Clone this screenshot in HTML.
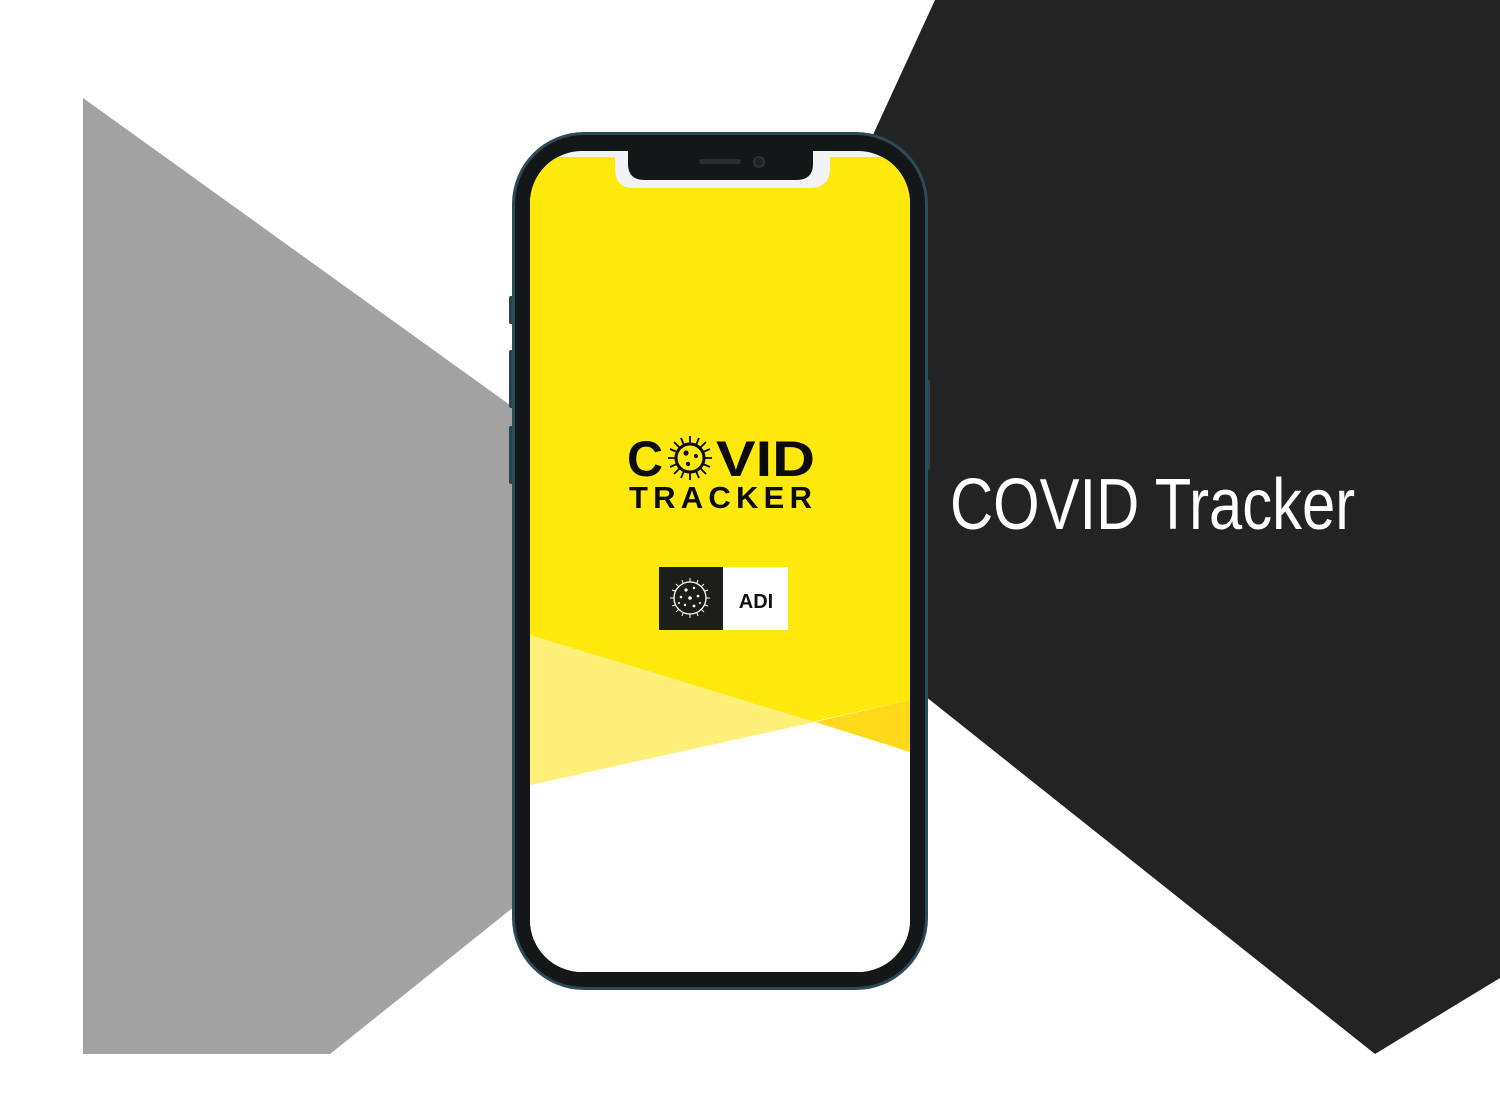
<!DOCTYPE html>
<html><head><meta charset="utf-8"><style>
html,body{margin:0;padding:0;background:#fff;}
body{width:1500px;height:1118px;position:relative;overflow:hidden;font-family:"Liberation Sans",sans-serif;}
svg{position:absolute;left:0;top:0;}
.title{position:absolute;left:950px;top:464px;font-size:72px;color:#fff;white-space:nowrap;transform:scaleX(0.83);transform-origin:left top;}
</style></head><body>
<svg width="1500" height="1118" viewBox="0 0 1500 1118">
  <polygon points="83,98 720,556 720,742 330,1054 83,1054" fill="#a3a2a2"/>
  <polygon points="935,0 1500,0 1500,978 1375,1054 720,533 797,300" fill="#232323"/>
  <rect x="509" y="296" width="5" height="28" rx="2" fill="#2a4352"/>
  <rect x="509" y="350" width="5" height="58" rx="2" fill="#2a4352"/>
  <rect x="509" y="426" width="5" height="58" rx="2" fill="#2a4352"/>
  <rect x="926" y="380" width="4" height="90" rx="2" fill="#2a4352"/>
  <rect x="512" y="132" width="416" height="858" rx="72" fill="#2c4a5a"/>
  <rect x="515" y="135" width="410" height="852" rx="69" fill="#141718"/>
  <clipPath id="scr"><rect x="530" y="151" width="380" height="821" rx="52"/></clipPath>
  <g clip-path="url(#scr)">
    <rect x="530" y="151" width="380" height="821" fill="#f2f3f5"/>
    <rect x="530" y="157" width="380" height="815" fill="#ffe90d"/>
    <polygon points="530,785 910,700 910,972 530,972" fill="#ffffff"/>
    <polygon points="530,635 815,722 530,785" fill="#fff07a"/>
    <polygon points="815,722 910,700 910,752" fill="#ffd91a"/>
  </g>
  <path d="M615,151 L629,151 Q628,151 628,160 L628,163 Q628,180 645,180 L796,180 Q813,180 813,163 L813,160 Q813,151 818,151 L830,151 L830,168 Q830,188 810,188 L633,188 Q615,188 615,168 Z" fill="#f2f3f5"/>
  <path d="M628,150 L813,150 L813,164 Q813,180 796,180 L645,180 Q628,180 628,164 Z" fill="#141718"/>
  <rect x="699" y="159" width="42" height="5" rx="2.5" fill="#2b2e30"/>
  <circle cx="759" cy="162" r="5" fill="#1e2123" stroke="#2e3234" stroke-width="2"/>
  <rect x="659" y="567" width="64" height="63" fill="#1d1d1b"/>
  <rect x="723" y="567" width="65" height="63" fill="#fff"/>
  <g stroke="#fff" stroke-width="1.3" fill="none">
    <circle cx="690" cy="598" r="16"/>
    <g stroke-width="1">
      <line x1="690" y1="578" x2="690" y2="582"/><line x1="690" y1="614" x2="690" y2="618"/>
      <line x1="670" y1="598" x2="674" y2="598"/><line x1="706" y1="598" x2="710" y2="598"/>
      <line x1="676" y1="584" x2="679" y2="587"/><line x1="701" y1="609" x2="704" y2="612"/>
      <line x1="704" y1="584" x2="701" y2="587"/><line x1="679" y1="609" x2="676" y2="612"/>
      <line x1="682" y1="580" x2="683" y2="583"/><line x1="698" y1="580" x2="697" y2="583"/>
      <line x1="682" y1="616" x2="683" y2="613"/><line x1="698" y1="616" x2="697" y2="613"/>
      <line x1="672" y1="590" x2="675" y2="591"/><line x1="672" y1="606" x2="675" y2="605"/>
      <line x1="708" y1="590" x2="705" y2="591"/><line x1="708" y1="606" x2="705" y2="605"/>
    </g>
  </g>
  <g fill="#fff">
    <circle cx="686" cy="590" r="1.6"/><circle cx="694" cy="588" r="1.2"/><circle cx="681" cy="597" r="1.3"/>
    <circle cx="690" cy="598" r="1.8"/><circle cx="698" cy="596" r="1.3"/><circle cx="685" cy="605" r="1.2"/>
    <circle cx="694" cy="606" r="1.4"/><circle cx="700" cy="603" r="1"/><circle cx="679" cy="603" r="1"/>
  </g>
  <text x="756" y="608" font-family="Liberation Sans" font-weight="bold" font-size="20" text-anchor="middle" fill="#111">ADI</text>
  <text x="627" y="476" font-family="Liberation Sans" font-weight="bold" font-size="50" fill="#0a0a0a" textLength="36" lengthAdjust="spacingAndGlyphs">C</text>
  <text x="716" y="476" font-family="Liberation Sans" font-weight="bold" font-size="50" fill="#0a0a0a" textLength="99" lengthAdjust="spacingAndGlyphs">VID</text>
  <g stroke="#0a0a0a">
    <circle cx="690" cy="458" r="14" fill="none" stroke-width="3"/>
    <g stroke-width="1.8">
      <line x1="690" y1="436" x2="690" y2="444"/><line x1="690" y1="472" x2="690" y2="480"/>
      <line x1="668" y1="458" x2="676" y2="458"/><line x1="704" y1="458" x2="712" y2="458"/>
      <line x1="674" y1="442" x2="680" y2="448"/><line x1="700" y1="468" x2="706" y2="474"/>
      <line x1="706" y1="442" x2="700" y2="448"/><line x1="680" y1="468" x2="674" y2="474"/>
      <line x1="681" y1="438" x2="684" y2="445"/><line x1="699" y1="438" x2="696" y2="445"/>
      <line x1="681" y1="478" x2="684" y2="471"/><line x1="699" y1="478" x2="696" y2="471"/>
      <line x1="670" y1="449" x2="677" y2="452"/><line x1="670" y1="467" x2="677" y2="464"/>
      <line x1="710" y1="449" x2="703" y2="452"/><line x1="710" y1="467" x2="703" y2="464"/>
    </g>
  </g>
  <g fill="#0a0a0a"><circle cx="686" cy="453" r="2.6"/><circle cx="696" cy="456" r="2"/><circle cx="688" cy="464" r="2.2"/></g>
  <text x="629" y="508" font-family="Liberation Sans" font-size="31" fill="#0a0a0a" font-weight="bold" textLength="183" lengthAdjust="spacing">TRACKER</text>
</svg>
<div class="title">COVID Tracker</div>
</body></html>
